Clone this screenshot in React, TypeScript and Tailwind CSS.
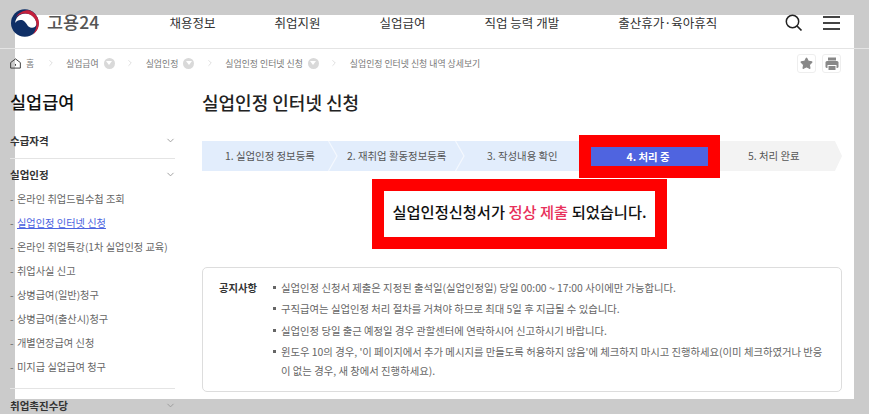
import { ChevronDown, ChevronRight, Star } from "lucide-react"

const navItems = ["채용정보", "취업지원", "실업급여", "직업 능력 개발", "출산휴가·육아휴직"]

const crumbs = [
  { label: "실업급여", more: true },
  { label: "실업인정", more: true },
  { label: "실업인정 인터넷 신청", more: true },
  { label: "실업인정 인터넷 신청 내역 상세보기", more: false },
]

const subMenu = [
  "온라인 취업드림수첩 조회",
  "실업인정 인터넷 신청",
  "온라인 취업특강(1차 실업인정 교육)",
  "취업사실 신고",
  "상병급여(일반)청구",
  "상병급여(출산시)청구",
  "개별연장급여 신청",
  "미지급 실업급여 청구",
]

const notices = [
  "실업인정 신청서 제출은 지정된 출석일(실업인정일) 당일 00:00 ~ 17:00 사이에만 가능합니다.",
  "구직급여는 실업인정 처리 절차를 거쳐야 하므로 최대 5일 후 지급될 수 있습니다.",
  "실업인정 당일 출근 예정일 경우 관할센터에 연락하시어 신고하시기 바랍니다.",
  "윈도우 10의 경우, '이 페이지에서 추가 메시지를 만들도록 허용하지 않음'에 체크하지 마시고 진행하세요(이미 체크하였거나 반응이 없는 경우, 새 창에서 진행하세요).",
]

const Logo = () => (
  <svg viewBox="0 0 28 28" className="w-[28px] h-[28px] shrink-0">
    <circle cx="13.8" cy="14" r="13.8" fill="#0f2f66" />
    <path d="M4.2 14C4.5 8.5 9 4.5 14.5 4.5C20.5 4.5 25.5 9.5 25.5 15C24.5 19 20.5 20 17.5 17.5C15.5 15.5 14.5 12 11 11C8 10.5 5.5 11.5 4.2 14Z" fill="#fff" />
    <path d="M4.5 9C7 3.5 13 1 18 1.2C24 3 28 9 28 14C28 19 25.5 23 22 25.5C24.5 22 25.5 18 25.5 15C25 9 20 4.5 14 4.5C10 4.5 6.5 6 4.5 9Z" fill="#c4203c" />
  </svg>
)

const StepArrow = () => (
  <svg viewBox="0 0 10 30" className="absolute right-[-8px] top-0 w-[10px] h-[30px] z-10">
    <path d="M0.5 0L9 15L0.5 30" fill="none" stroke="#f4f8fe" strokeWidth="1.2" />
  </svg>
)

const App = () => {
  return (
    <div className="relative w-[869px] h-[414px] overflow-hidden bg-[#cbcbcb] text-[#444] font-['Noto_Sans_CJK_KR','Noto_Sans',sans-serif]">
      <div className="absolute left-[15px] top-[15px] w-[839px] h-[384px] bg-white" />

      <div className="relative">
        <header className="h-[49px] border-b border-[#e4e4e4] flex items-start pl-[11px] pt-[9px]">
          <Logo />
          <span className="ml-[8px] mt-[2px] w-[54px] text-[17.5px] leading-[22px] font-medium text-[#555] whitespace-nowrap">고용24</span>
          <nav className="ml-[68.5px] mt-[5px] flex gap-[59px] text-[12.5px] leading-[18px] text-[#333] whitespace-nowrap">
            {navItems.map(item => (
              <a key={item}>{item}</a>
            ))}
          </nav>
          <svg viewBox="0 0 18 18" className="ml-[67.5px] mt-[5px] w-[18px] h-[18px]">
            <circle cx="7.5" cy="7.5" r="6.2" fill="none" stroke="#222" strokeWidth="1.5" />
            <path d="M12 12L16.5 16.5" stroke="#222" strokeWidth="1.7" />
          </svg>
          <div className="ml-[20px] mt-[7px] w-[17px] flex flex-col gap-[4px]">
            <i className="block h-[2px] bg-[#444]" />
            <i className="block h-[2px] bg-[#444]" />
            <i className="block h-[2px] bg-[#444]" />
          </div>
        </header>

        <div className="h-[29px] flex items-center pl-[10px] pr-[28px] text-[8.9px] text-[#777] whitespace-nowrap">
          <svg viewBox="0 0 12 12" className="w-[11px] h-[11px]">
            <path d="M0.7 5L6 1L11.3 5V11H0.7Z" fill="none" stroke="#333" strokeWidth="1" />
            <path d="M6 6.5V8.5" stroke="#333" strokeWidth="1" />
          </svg>
          <span className="ml-[5px] w-[9px]">홈</span>
          {crumbs.map(crumb => (
            <div key={crumb.label} className="flex items-center">
              <ChevronRight className="mx-[10.5px] w-[10px] h-[10px] text-[#ccc]" strokeWidth={1.5} />
              <span>{crumb.label}</span>
              {crumb.more && (
                <span className="ml-[5px] w-[11px] h-[11px] rounded-full bg-[#d9d9d9] flex items-center justify-center">
                  <i className="block border-x-[3px] border-t-[4px] border-x-transparent border-t-white" />
                </span>
              )}
            </div>
          ))}
          <div className="ml-auto flex gap-[6px]">
            <button className="w-[19px] h-[19px] border border-[#eee] rounded-[3px] flex items-center justify-center">
              <Star className="w-[13px] h-[13px] text-[#888]" fill="#888" />
            </button>
            <button className="w-[19px] h-[19px] border border-[#eee] rounded-[3px] flex items-center justify-center">
              <svg viewBox="0 0 14 14" className="w-[14px] h-[14px]">
                <path d="M3 0.5H11V3.5H3Z" fill="#888" />
                <rect x="0.5" y="4" width="13" height="7" rx="1.5" fill="#888" />
                <rect x="3" y="8.5" width="8" height="5" fill="#888" stroke="#fff" strokeWidth="1" />
              </svg>
            </button>
          </div>
        </div>

        <div className="flex pl-[10px] pr-[27px] pt-[11px]">
          <aside className="w-[165px] shrink-0">
            <h2 className="text-[17.5px] leading-[26px] font-medium text-[#111] whitespace-nowrap">실업급여</h2>
            <div className="mt-[18px] h-[26px] border-b border-[#e4e4e4] flex items-start justify-between text-[10.5px] leading-[16px] font-bold text-[#333]">
              수급자격
              <ChevronDown className="mt-[2px] mr-[-1px] w-[11px] h-[11px] text-[#999]" />
            </div>
            <div className="mt-[8px] flex items-start justify-between text-[10.5px] leading-[16px] font-bold text-[#333]">
              실업인정
              <ChevronDown className="mt-[2px] mr-[-1px] w-[11px] h-[11px] text-[#999]" />
            </div>
            <ul className="mt-[4px] pb-[9px] border-b border-[#e4e4e4] text-[10.2px] leading-[24px] text-[#666] whitespace-nowrap">
              {subMenu.map(item => (
                <li key={item} className="flex items-center h-[24px]">
                  <span className="w-[7px] text-[#666]">-</span>
                  <a className={item === "실업인정 인터넷 신청" ? "text-[#4a62e0] underline" : ""}>{item}</a>
                </li>
              ))}
            </ul>
            <div className="mt-[9px] flex items-start justify-between text-[10.5px] leading-[16px] font-bold text-[#333]">
              취업촉진수당
              <ChevronDown className="mt-[2px] mr-[-1px] w-[11px] h-[11px] text-[#999]" />
            </div>
          </aside>

          <main className="ml-[27px] w-[640px] shrink-0">
            <h1 className="text-[18px] leading-[26px] font-medium text-[#222] whitespace-nowrap">실업인정 인터넷 신청</h1>

            <div className="mt-[26px] h-[30px] flex text-[10.4px] text-[#555] whitespace-nowrap">
              <div className="relative w-[128px] bg-[#e2edfc] flex items-center pl-[23px]">1. 실업인정 정보등록<StepArrow /></div>
              <div className="relative w-[127px] bg-[#e2edfc] flex items-center pl-[17px]">2. 재취업 활동정보등록<StepArrow /></div>
              <div className="w-[122px] bg-[#e2edfc] flex items-center pl-[30px]">3. 작성내용 확인</div>
              <div className="relative z-20 w-[141px] h-[43px] -my-[6px] border-[12px] border-[#ff0000]">
                <div className="h-full bg-[#4f64e0] flex items-center justify-center pr-[3px] font-bold text-white">4. 처리 중</div>
              </div>
              <div className="w-[122px] bg-[#f3f3f3] flex items-center pl-[28px] [clip-path:polygon(0_0,115px_0,100%_50%,115px_100%,0_100%)]">5. 처리 완료</div>
            </div>

            <div className="relative z-30 mt-[8px] ml-[170px] w-[295px] h-[70px] border-[12px] border-[#ff0000] bg-white flex items-center justify-center pb-[6px] text-[15.3px] font-medium text-[#111] whitespace-nowrap">
              <p>실업인정신청서가 <span className="text-[#e8305a]">정상 제출</span> 되었습니다.</p>
            </div>

            <section className="mt-[18px] h-[125px] border border-[#ddd] rounded-[5px] flex pl-[16px] pt-[10px] text-[10.35px]">
              <strong className="w-[53px] shrink-0 leading-[19px] text-[#333]">공지사항</strong>
              <ul className="text-[#666]">
                {notices.map(notice => (
                  <li key={notice} className="relative pl-[9px] w-[553px] leading-[19px] mb-[2.4px]">
                    <i className="absolute left-[1px] top-[8px] w-[3px] h-[3px] bg-[#666]" />
                    {notice}
                  </li>
                ))}
              </ul>
            </section>
          </main>
        </div>
      </div>
    </div>
  )
}

export default App
